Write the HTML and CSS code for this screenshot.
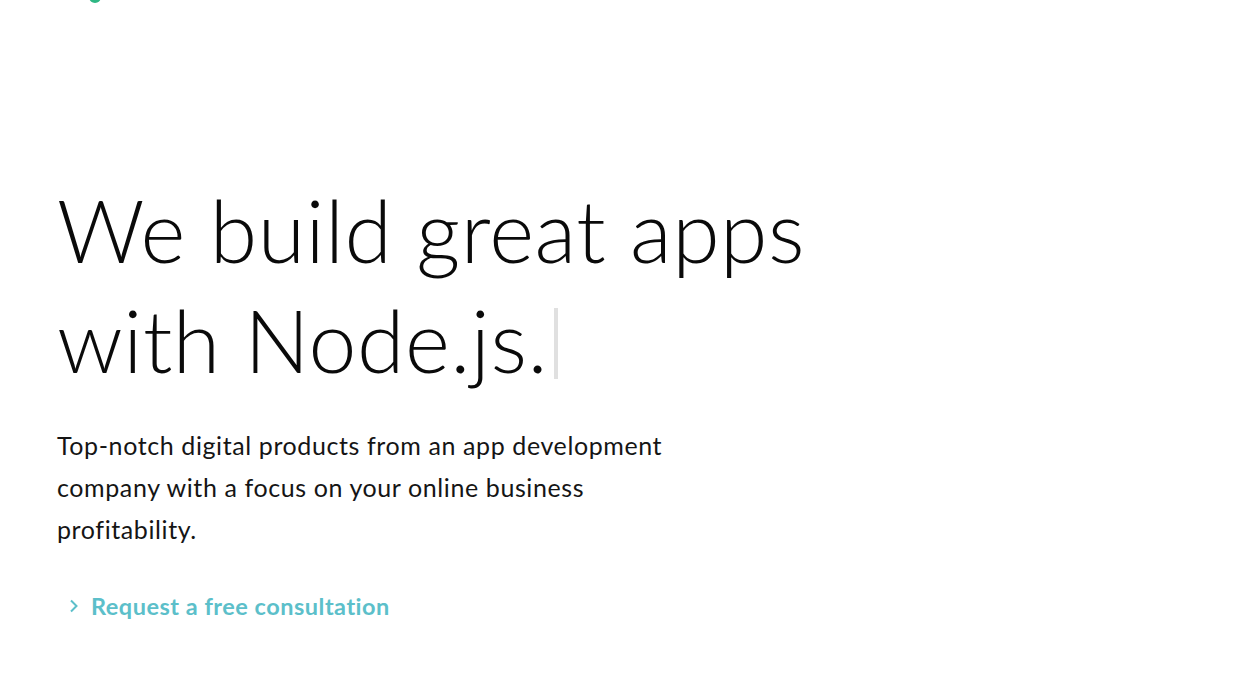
FILE: index.html
```html
<!DOCTYPE html>
<html lang="en">
<head>
<meta charset="utf-8">
<title>We build great apps with Node.js</title>
<link rel="stylesheet" href="styles.css">
</head>
<body>
<header class="topbar">
  <span class="logo-dot"></span>
</header>
<main class="hero">
  <h1 class="hero-title">We build great apps<br>with Node.js.<span class="caret"></span></h1>
  <p class="hero-lead">Top-notch digital products from an app development company with a focus on your online business profitability.</p>
  <a class="hero-cta" href="#">
    <svg class="cta-icon" width="10" height="14" viewBox="0 0 10 14"><path d="M2 1.5 L7.5 7 L2 12.5" fill="none" stroke="currentColor" stroke-width="2"/></svg>
    <span>Request a free consultation</span>
  </a>
</main>
</body>
</html>
```
FILE: styles.css
```css
html, body {
  margin: 0;
  padding: 0;
  background: #fff;
}
body {
  font-family: Lato, "Liberation Sans", sans-serif;
  color: #111;
  width: 1241px;
  height: 680px;
  overflow: hidden;
}
.topbar {
  height: 0;
  position: relative;
}
.logo-dot {
  position: absolute;
  left: 89px;
  top: -9px;
  width: 12px;
  height: 12px;
  border-radius: 50%;
  background: #2fb784;
}
.hero {
  padding: 175px 0 0 57px;
}
.hero-title {
  margin: 0;
  font-weight: 300;
  font-size: 86px;
  line-height: 110px;
  letter-spacing: 0.5px;
  color: #0a0a0a;
}
.caret {
  display: inline-block;
  width: 4px;
  height: 71px;
  background: #e0e0e0;
  margin-left: 6px;
  vertical-align: -6px;
}
.hero-lead {
  margin: 29px 0 0;
  width: 625px;
  font-size: 25px;
  line-height: 42px;
  letter-spacing: 0.6px;
  color: #151515;
}
.hero-cta {
  display: inline-flex;
  align-items: center;
  gap: 12px;
  margin: 42px 0 0 12px;
  color: #5cbfca;
  font-size: 23.5px;
  font-weight: 700;
  letter-spacing: 0.5px;
  text-decoration: none;
}
.cta-icon {
  display: block;
}
```
